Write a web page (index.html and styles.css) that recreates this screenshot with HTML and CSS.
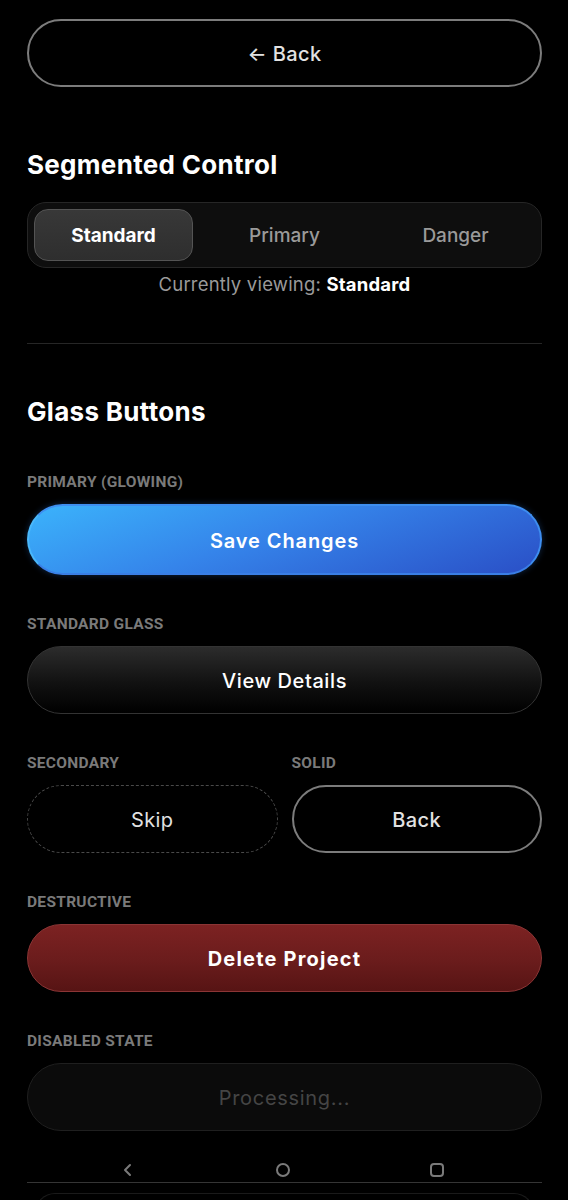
FILE: index.html
```html
<!DOCTYPE html>
<html lang="en">
<head>
<meta charset="utf-8">
<title>Glass Buttons</title>
<link rel="stylesheet" href="styles.css">
</head>
<body>
<main class="page">
  <button class="btn btn-outline btn-top">← Back</button>

  <h2 class="heading heading-seg">Segmented Control</h2>
  <div class="segmented">
    <div class="seg seg-active">Standard</div>
    <div class="seg">Primary</div>
    <div class="seg">Danger</div>
  </div>
  <p class="caption">Currently viewing: <strong>Standard</strong></p>

  <hr class="divider">

  <h2 class="heading heading-glass">Glass Buttons</h2>

  <section class="group">
    <div class="label">PRIMARY (GLOWING)</div>
    <button class="btn btn-primary">Save Changes</button>
  </section>

  <section class="group">
    <div class="label">STANDARD GLASS</div>
    <button class="btn btn-glass">View Details</button>
  </section>

  <div class="row">
    <section class="group">
      <div class="label">SECONDARY</div>
      <button class="btn btn-dashed">Skip</button>
    </section>
    <section class="group">
      <div class="label">SOLID</div>
      <button class="btn btn-outline">Back</button>
    </section>
  </div>

  <section class="group">
    <div class="label">DESTRUCTIVE</div>
    <button class="btn btn-danger">Delete Project</button>
  </section>

  <section class="group">
    <div class="label">DISABLED STATE</div>
    <button class="btn btn-disabled" disabled>Processing...</button>
  </section>

  <nav class="sysnav">
    <svg class="nav-ic" width="16" height="16" viewBox="0 0 16 16"><path d="M10 3 L5 8 L10 13" fill="none" stroke="#7a7a7a" stroke-width="2" stroke-linecap="round" stroke-linejoin="round"/></svg>
    <svg class="nav-ic" width="16" height="16" viewBox="0 0 16 16"><circle cx="8" cy="8" r="6" fill="none" stroke="#7a7a7a" stroke-width="2"/></svg>
    <svg class="nav-ic" width="16" height="16" viewBox="0 0 16 16"><rect x="2" y="2" width="12" height="12" rx="3" fill="none" stroke="#7a7a7a" stroke-width="2"/></svg>
  </nav>
  <div class="navline"></div>
  <div class="peek"></div>
</main>
</body>
</html>
```
FILE: styles.css
```css
* { box-sizing: border-box; }
html, body { margin: 0; padding: 0; background: #000; }
body {
  font-family: Inter, "Noto Sans", "Liberation Sans", sans-serif;
  color: #fff;
  overflow: hidden;
  height: 1200px;
}
.page {
  padding: 19px 26px 0 27px;
  width: 568px;
}
.btn {
  display: flex;
  align-items: center;
  justify-content: center;
  width: 100%;
  height: 68px;
  border-radius: 34px;
  font-family: Inter, "Noto Sans", sans-serif;
  font-size: 20px;
  margin: 0;
  padding: 2px 0 0;
  cursor: pointer;
}
.btn-outline {
  background: #000;
  border: 2px solid #7c7c7c;
  color: #e2e2e2;
  font-weight: 500;
  letter-spacing: 0.4px;
}
.heading {
  margin: 0;
  font-size: 26px;
  line-height: 30px;
  font-weight: 700;
  letter-spacing: 0.3px;
  color: #fff;
}
.heading-seg { margin-top: 63px; }
.segmented {
  margin-top: 22px;
  display: grid;
  grid-template-columns: repeat(3, 1fr);
  height: 66px;
  padding: 6px 0;
  border: 1px solid #262626;
  border-radius: 19px;
  background: #0e0e0e;
}
.seg {
  display: flex;
  align-items: center;
  justify-content: center;
  font-size: 19px;
  font-weight: 500;
  color: #9a9a9a;
  border-radius: 14px;
}
.seg-active {
  margin: 0 6px;
  background: linear-gradient(180deg, #383838, #2e2e2e);
  border: 1px solid #545454;
  color: #fff;
  font-weight: 700;
}
.caption {
  margin: 5px 0 0;
  text-align: center;
  font-size: 18.5px;
  line-height: 22px;
  color: #9a9a9a;
  letter-spacing: 0.2px;
}
.caption strong { color: #fff; font-weight: 700; }
.divider {
  margin: 48px 0 0;
  border: 0;
  height: 1px;
  background: #262626;
}
.heading-glass { margin-top: 53px; }
.heading-glass + .group { margin-top: 46px; }
.group { margin-top: 40px; }
.label {
  font-family: Roboto, "Liberation Sans", sans-serif;
  font-size: 15.5px;
  line-height: 18px;
  font-weight: 700;
  color: #7a7a7a;
  letter-spacing: 0.3px;
  margin-bottom: 13px;
}
.btn-primary {
  height: 71px;
  border-radius: 36px;
  background: linear-gradient(160deg, #3bb3fb 0%, #3584ea 45%, #2a4fc6 100%);
  border: 2px solid #3e8ef0;
  border-left-color: #4ab8fb;
  border-bottom-color: #3a7fe6;
  color: #fff;
  font-weight: 600;
  letter-spacing: 0.9px;
  box-shadow: 0 0 6px rgba(50, 130, 240, 0.3);
}
.btn-glass {
  background: linear-gradient(180deg, #2c2c2c 0%, #111 55%, #000 100%);
  border: 1px solid #333;
  color: #fff;
  font-weight: 500;
  letter-spacing: 0.6px;
}
.row {
  display: flex;
  gap: 14px;
}
.row .group { flex: 1; }
.btn-dashed {
  background: #000;
  border: 1px dashed #4a4a4a;
  color: #e2e2e2;
  font-weight: 400;
  letter-spacing: 0.4px;
}
.btn-danger {
  background: linear-gradient(180deg, #7c2222 0%, #6a1c1c 55%, #571414 100%);
  border: 1px solid #8b3535;
  color: #fff;
  font-weight: 700;
  letter-spacing: 1.2px;
}
.btn-disabled {
  background: #0b0b0b;
  border: 1px solid #1f1f1f;
  color: #454545;
  font-weight: 400;
  letter-spacing: 0.7px;
  cursor: default;
}
.sysnav {
  margin-top: 31px;
  display: flex;
  justify-content: space-between;
  padding: 0 97px 0 93px;
  height: 16px;
}
.nav-ic { display: block; }
.navline {
  margin-top: 4px;
  height: 1px;
  background: #353535;
}
.peek {
  margin: 10px 8px 0;
  height: 20px;
  border: 1px solid #1a1a1a;
  border-bottom: 0;
  border-radius: 24px 24px 0 0;
}
```
